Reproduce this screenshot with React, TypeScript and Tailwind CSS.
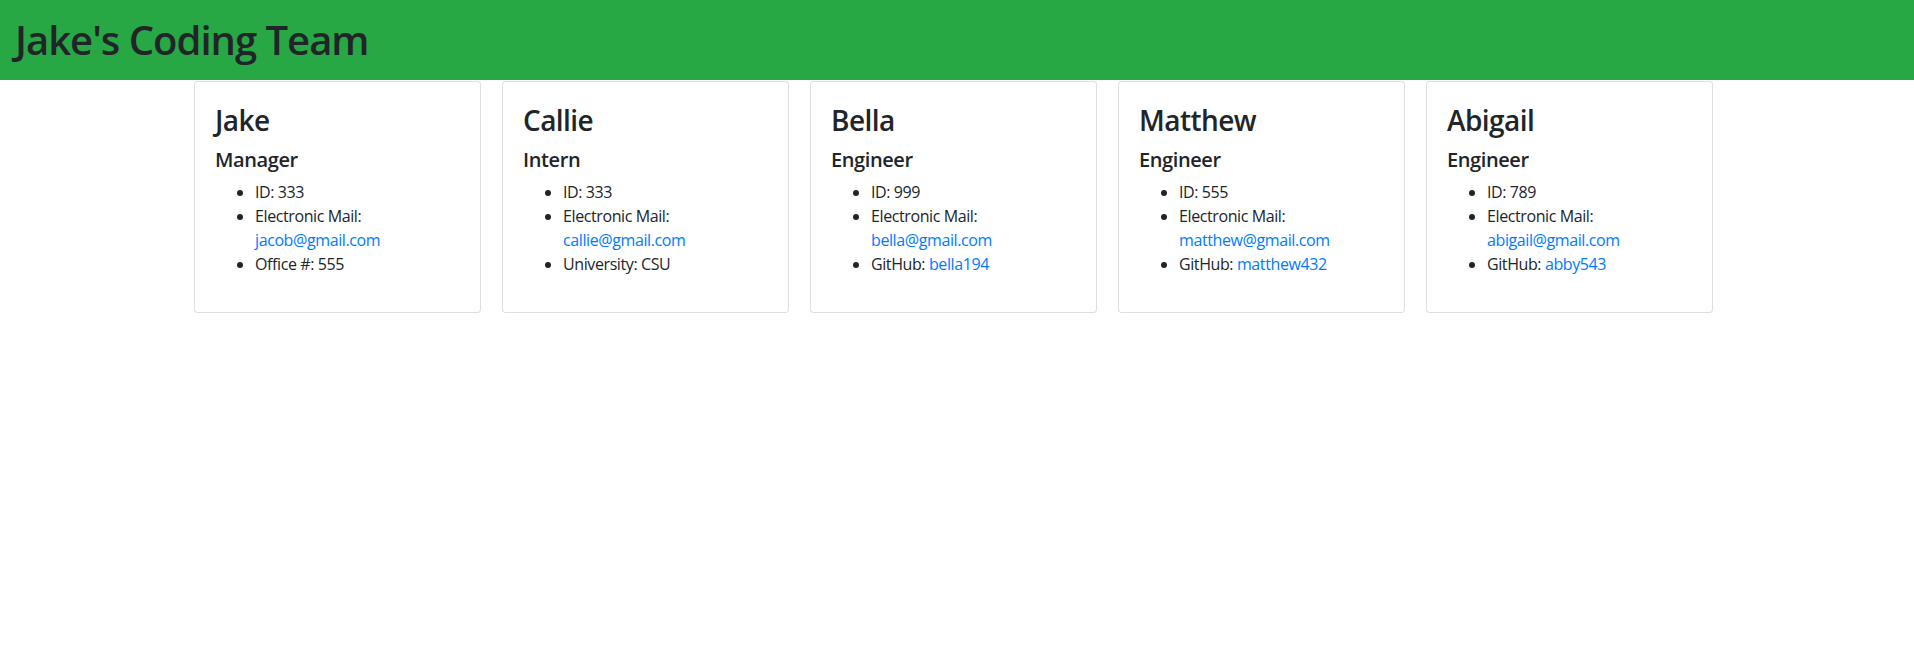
import React from "react";

type Member = {
  name: string;
  role: string;
  id: string;
  email: string;
  extraLabel: string;
  extraValue: string;
  extraLink?: boolean;
};

const team: Member[] = [
  { name: "Jake", role: "Manager", id: "333", email: "jacob@gmail.com", extraLabel: "Office #:", extraValue: "555" },
  { name: "Callie", role: "Intern", id: "333", email: "callie@gmail.com", extraLabel: "University:", extraValue: "CSU" },
  { name: "Bella", role: "Engineer", id: "999", email: "bella@gmail.com", extraLabel: "GitHub:", extraValue: "bella194", extraLink: true },
  { name: "Matthew", role: "Engineer", id: "555", email: "matthew@gmail.com", extraLabel: "GitHub:", extraValue: "matthew432", extraLink: true },
  { name: "Abigail", role: "Engineer", id: "789", email: "abigail@gmail.com", extraLabel: "GitHub:", extraValue: "abby543", extraLink: true },
];

function MemberCard({ m }: { m: Member }) {
  return (
    <div className="w-[287px] border border-black/[0.125] rounded bg-white pt-[22px] pb-5 px-5">
      <h3 className="text-[28px] leading-[1.2] font-semibold tracking-[-0.02em] mb-[10px]">{m.name}</h3>
      <h5 className="text-[20px] leading-[1.2] font-semibold tracking-[-0.02em] mb-2">{m.role}</h5>
      <ul className="list-disc pl-10 mb-4 text-[16px] leading-6 tracking-[-0.025em]">
        <li>ID: {m.id}</li>
        <li>
          Electronic Mail:
          <br />
          <a href="#" className="text-[#007bff]">
            {m.email}
          </a>
        </li>
        <li>
          {m.extraLabel}{" "}
          {m.extraLink ? (
            <a href="#" className="text-[#007bff]">
              {m.extraValue}
            </a>
          ) : (
            m.extraValue
          )}
        </li>
      </ul>
    </div>
  );
}

export default function App() {
  return (
    <div className="min-h-screen bg-white text-[#212529] font-['Open_Sans',sans-serif]">
      <header className="h-20 bg-[#28a745] flex items-center px-[15px]">
        <h1 className="text-[40px] leading-[1.2] font-semibold tracking-[-0.025em]">Jake's Coding Team</h1>
      </header>
      <div className="flex gap-[21px] pl-[194px] mt-px">
        {team.map((m) => (
          <MemberCard key={m.name} m={m} />
        ))}
      </div>
    </div>
  );
}
